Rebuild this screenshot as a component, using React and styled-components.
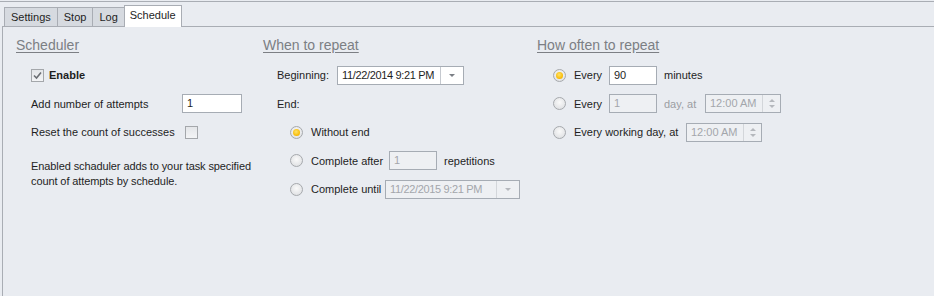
import React from 'react'
import styled, { createGlobalStyle, css } from 'styled-components'

const GlobalStyle = createGlobalStyle`
  html, body {
    margin: 0;
    padding: 0;
    background: #e9ecf1;
  }
  body {
    font-family: "Liberation Sans", Arial, sans-serif;
    font-size: 11px;
    color: #1e1e1e;
    white-space: nowrap;
  }
`

const Frame = styled.div`
  height: 295px;
  margin-top: 1px;
  border-top: 1px solid #a9adb4;
  display: flex;
  flex-direction: column;
  overflow: hidden;
`

const TabStrip = styled.div`
  display: flex;
  align-items: flex-end;
  height: 24px;
  padding-left: 4px;
  position: relative;
  z-index: 1;
`

const Tab = styled.div`
  height: 18px;
  line-height: 18px;
  padding: 0 6px;
  background: #d6dae0;
  border: 1px solid #a9adb4;
  border-bottom: none;
  margin-right: -1px;
  color: #1e1e1e;
  ${p => p.$active && css`
    height: 21px;
    line-height: 19px;
    background: #ffffff;
    margin-bottom: -1px;
    padding: 0 5px;
  `}
`

const Panel = styled.div`
  flex: 1;
  margin-left: 2px;
  border-top: 1px solid #a9adb4;
  border-left: 1px solid #a9adb4;
  display: flex;
  padding: 9px 0 0 13px;
`

const Column = styled.div`
  width: ${p => p.$w}px;
  flex-shrink: 0;
`

const Heading = styled.div`
  font-size: 14px;
  line-height: 18px;
  color: #7c7f84;
  text-decoration: underline;
  text-underline-offset: 2px;
  margin-bottom: 11px;
`

const Body = styled.div`
  padding-left: ${p => p.$indent}px;
  display: flex;
  flex-direction: column;
  gap: 8.5px;
`

const Row = styled.div`
  display: flex;
  align-items: center;
  height: 20px;
  padding-left: ${p => p.$indent || 0}px;
`

const Label = styled.span`
  width: ${p => (p.$w ? p.$w + 'px' : 'auto')};
  flex-shrink: 0;
  color: ${p => (p.$dim ? '#9b9ea3' : '#1e1e1e')};
  font-weight: ${p => (p.$bold ? 'bold' : 'normal')};
  margin-right: ${p => p.$mr || 0}px;
`

const Input = styled.div`
  box-sizing: border-box;
  width: ${p => p.$w}px;
  height: 19px;
  border: 1px solid #a6acb4;
  background: ${p => (p.$disabled ? '#eef0f3' : '#ffffff')};
  color: ${p => (p.$disabled ? '#a3a6ab' : '#1e1e1e')};
  padding-left: 4px;
  line-height: 17px;
  flex-shrink: 0;
  display: flex;
  align-items: center;
  margin-right: ${p => p.$mr || 0}px;
`

const InputText = styled.span`
  flex: 1;
  overflow: hidden;
  letter-spacing: ${p => (p.$tight ? '-0.35px' : '0')};
`

const SideButton = styled.div`
  width: 22px;
  height: 100%;
  flex-shrink: 0;
  border-left: 1px solid ${p => (p.$disabled ? '#d3d6da' : '#c5c9cf')};
  display: flex;
  align-items: center;
  justify-content: center;
  flex-direction: column;
  gap: 3px;
`

const Arrow = styled.div`
  width: 0;
  height: 0;
  border-left: 3px solid transparent;
  border-right: 3px solid transparent;
  ${p => p.$up
    ? css`border-bottom: 3px solid #b5b8bd;`
    : css`border-top: 3px solid ${p.$dark ? '#7b7f85' : '#b5b8bd'};`}
`

const Box = styled.div`
  box-sizing: border-box;
  width: 13px;
  height: 13px;
  border: 1px solid #a4a7ab;
  background: linear-gradient(#e4e6e9, #f3f4f6);
  display: flex;
  align-items: center;
  justify-content: center;
  margin-right: ${p => p.$mr || 0}px;
  flex-shrink: 0;
`

const Radio = styled.div`
  box-sizing: border-box;
  width: 13px;
  height: 13px;
  border-radius: 50%;
  border: 1px solid #a6a9ad;
  background: radial-gradient(circle at 50% 40%, #fafafa 0%, #d9dbde 100%);
  margin-right: 8px;
  flex-shrink: 0;
  display: flex;
  align-items: center;
  justify-content: center;
  &::after {
    content: '';
    width: 7px;
    height: 7px;
    border-radius: 50%;
    display: ${p => (p.$on ? 'block' : 'none')};
    background: radial-gradient(circle at 45% 40%, #ffe36a 0%, #f7b800 70%, #d99400 100%);
  }
`

const Note = styled.div`
  line-height: 15px;
  margin-top: 8px;
  color: #1e1e1e;
  letter-spacing: -0.1px;
`

const Check = () => (
  <svg width="9" height="9" viewBox="0 0 9 9">
    <path d="M1 4.5 L3.5 7 L8 1.5" fill="none" stroke="#6c6f74" strokeWidth="1.6" />
  </svg>
)

const Combo = ({ w, value, disabled, mr }) => (
  <Input $w={w} $disabled={disabled} $mr={mr} style={{ paddingRight: 0 }}>
    <InputText $tight>{value}</InputText>
    <SideButton $disabled={disabled}>
      <Arrow $dark={!disabled} />
    </SideButton>
  </Input>
)

const Spin = ({ w, value }) => (
  <Input $w={w} $disabled style={{ paddingRight: 0 }}>
    <InputText>{value}</InputText>
    <SideButton $disabled style={{ width: 17 }}>
      <Arrow $up />
      <Arrow />
    </SideButton>
  </Input>
)

export default function App() {
  return (
    <>
      <GlobalStyle />
      <Frame>
        <TabStrip>
          <Tab>Settings</Tab>
          <Tab>Stop</Tab>
          <Tab>Log</Tab>
          <Tab $active>Schedule</Tab>
        </TabStrip>
        <Panel>
          <Column $w={247}>
            <Heading>Scheduler</Heading>
            <Body $indent={15}>
              <Row>
                <Box $mr={5}><Check /></Box>
                <Label $bold>Enable</Label>
              </Row>
              <Row>
                <Label $w={151}>Add number of attempts</Label>
                <Input $w={60}>1</Input>
              </Row>
              <Row>
                <Label $w={154}>Reset the count of successes</Label>
                <Box />
              </Row>
              <Note>
                Enabled schaduler adds to your task specified<br />
                count of attempts by schedule.
              </Note>
            </Body>
          </Column>
          <Column $w={274}>
            <Heading>When to repeat</Heading>
            <Body $indent={14}>
              <Row>
                <Label $w={60}>Beginning:</Label>
                <Combo w={127} value="11/22/2014 9:21 PM" />
              </Row>
              <Row>
                <Label>End:</Label>
              </Row>
              <Row $indent={13}>
                <Radio $on />
                <Label>Without end</Label>
              </Row>
              <Row $indent={13}>
                <Radio />
                <Label $w={78}>Complete after</Label>
                <Input $w={48} $disabled $mr={7}>1</Input>
                <Label>repetitions</Label>
              </Row>
              <Row $indent={13}>
                <Radio />
                <Label $w={74}>Complete until</Label>
                <Combo w={135} value="11/22/2015 9:21 PM" disabled />
              </Row>
            </Body>
          </Column>
          <Column $w={360}>
            <Heading>How often to repeat</Heading>
            <Body $indent={16}>
              <Row>
                <Radio $on />
                <Label $w={35}>Every</Label>
                <Input $w={48} $mr={7}>90</Input>
                <Label>minutes</Label>
              </Row>
              <Row>
                <Radio />
                <Label $w={35}>Every</Label>
                <Input $w={48} $disabled $mr={7}>1</Input>
                <Label $dim $w={41}>day, at</Label>
                <Spin w={76} value="12:00 AM" />
              </Row>
              <Row>
                <Radio />
                <Label $w={112}>Every working day, at</Label>
                <Spin w={76} value="12:00 AM" />
              </Row>
            </Body>
          </Column>
        </Panel>
      </Frame>
    </>
  )
}
